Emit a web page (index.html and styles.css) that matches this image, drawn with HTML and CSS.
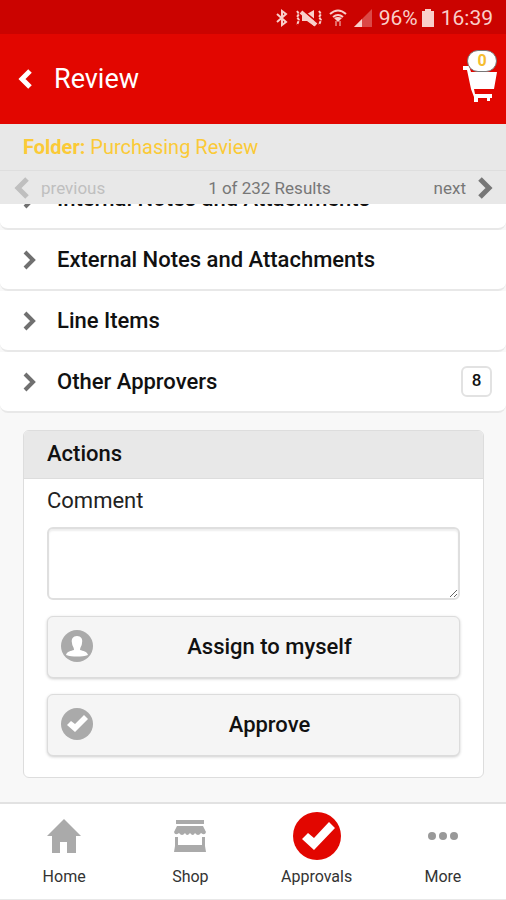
FILE: index.html
```html
<!DOCTYPE html>
<html lang="en">
<head>
<meta charset="utf-8">
<meta name="viewport" content="width=device-width, initial-scale=1">
<title>Review</title>
<link rel="stylesheet" href="styles.css">
</head>
<body>
<div class="status">
  <svg width="12" height="18" viewBox="0 0 12 18" fill="none" stroke="currentColor" stroke-width="2"><path d="M1 5l9 8-4 3V2l4 3-9 8"/></svg>
  <svg class="mute" width="27" height="18" viewBox="0 0 27 18" fill="currentColor"><path d="M7 5h5l7-4v16l-7-5H7z"/><path d="M7 1l16 13" fill="none" stroke="#cb0300" stroke-width="2"/><path d="M6 3l15 13" fill="none" stroke="currentColor" stroke-width="4"/><path d="M2 2l2 3-2 3 2 3-2 5M24 2l2 3-2 3 2 3-2 5" fill="none" stroke="currentColor" stroke-width="2" stroke-dasharray="3 1"/></svg>
  <svg class="wifi" width="18" height="18" viewBox="0 0 18 18" fill="none" stroke="currentColor" stroke-width="2"><path d="M1 5q8-7 16 0M4 8q5-4 10 0"/><path d="M5 9q4-2 8 0l-4 4z" fill="currentColor" stroke="none"/><path d="M7 12v5M11 12v5" opacity=".5"/></svg>
  <svg width="18" height="18" viewBox="0 0 18 18" fill="currentColor"><path d="M0 18L18 0v18z" opacity=".35"/><path d="M0 18l8-8v8z"/></svg>
  <span class="battery">96%<svg width="12" height="18" viewBox="0 0 12 18" fill="currentColor"><path d="M3 0h6v2h3v16H0V2h3z"/></svg></span>
  <span>16:39</span>
</div>
<header class="header">
  <button class="back" type="button" aria-label="Back"><svg width="14" height="20" viewBox="0 0 14 20" fill="none" stroke="currentColor" stroke-width="5"><path d="M12 2L4 10l8 8"/></svg></button>
  <h1>Review</h1>
  <a class="cart" href="#cart" aria-label="Cart, 0 items">
    <svg width="34" height="36" viewBox="0 0 34 36" fill="currentColor"><path d="M0 0h6l2 6h26l-3 17H11l1 5h17v4h-2v3h-3v-3h-9v4h-4v-5L8 23 4 4H0z"/></svg>
    <span class="count">0</span>
  </a>
</header>
<div class="folder"><b>Folder:</b> Purchasing Review</div>
<nav class="pager" aria-label="Results">
  <button type="button" disabled><svg width="15" height="22" viewBox="0 0 15 22" fill="none" stroke="currentColor" stroke-width="5"><path d="M13 2L4 11l9 9"/></svg>previous</button>
  <span>1 of 232 Results</span>
  <button type="button">next<svg width="15" height="22" viewBox="0 0 15 22" fill="none" stroke="currentColor" stroke-width="5"><path d="M2 2l9 9-9 9"/></svg></button>
</nav>
<main class="content">
  <div class="sections">
    <button type="button"><svg width="13" height="20" viewBox="0 0 13 20"><path d="M2 2l8 8-8 8"/></svg>Internal Notes and Attachments</button>
    <button type="button"><svg width="13" height="20" viewBox="0 0 13 20"><path d="M2 2l8 8-8 8"/></svg>External Notes and Attachments</button>
    <button type="button"><svg width="13" height="20" viewBox="0 0 13 20"><path d="M2 2l8 8-8 8"/></svg>Line Items</button>
    <button type="button"><svg width="13" height="20" viewBox="0 0 13 20"><path d="M2 2l8 8-8 8"/></svg>Other Approvers<span class="badge">8</span></button>
  </div>
  <section class="panel">
    <h2>Actions</h2>
    <form class="form">
      <label for="comment">Comment</label>
      <textarea id="comment"></textarea>
      <button type="button"><svg width="32" height="32" viewBox="0 0 32 32"><circle cx="16" cy="16" r="16" fill="#aaa"/><path d="M16 6c4 0 6 3 5 7 0 3-2 4-2 7 3 1 7 1 8 5-6 2-16 2-22 0 1-4 5-4 8-5 0-3-2-4-2-7-1-4 1-7 5-7z" fill="#fff"/></svg>Assign to myself</button>
      <button type="button"><svg width="32" height="32" viewBox="0 0 32 32"><circle cx="16" cy="16" r="16" fill="#aaa"/><path d="M6 17l4-4 4 3 9-9 4 4-13 13z" fill="#fff"/></svg>Approve</button>
    </form>
  </section>
</main>
<nav class="tabs" aria-label="Main">
  <a href="#home"><svg width="34" height="34" viewBox="0 0 34 34" fill="#aaa"><path d="M17 0l17 17h-5v17h-9V23h-7v11H5V17H0z"/></svg>Home</a>
  <a href="#shop"><svg width="32" height="32" viewBox="0 0 32 32" fill="#aaa"><path d="M2 0h28v4H2zM3 6h26l3 6q-1 4-5 1-3 4-6 0-2 4-5 0-3 4-5 0-3 4-6 0-4 3-5-1zM1 17h3v8h24v-8h3v9l1 6H0l1-6z"/></svg>Shop</a>
  <a href="#approvals" aria-current="page"><svg width="48" height="48" viewBox="0 0 48 48"><circle cx="24" cy="24" r="24" fill="#e20600"/><path d="M9 27l6-6 6 5 15-16 6 6-21 22z" fill="#fff"/></svg>Approvals</a>
  <a href="#more"><svg width="30" height="8" viewBox="0 0 30 8" fill="#999"><circle cx="4" cy="4" r="4"/><circle cx="15" cy="4" r="4"/><circle cx="26" cy="4" r="4"/></svg>More</a>
</nav>
</body>
</html>
```
FILE: styles.css
```css
* { box-sizing: border-box; }
body {
  margin: 0;
  min-height: 100vh;
  display: flex;
  flex-direction: column;
  background: #f8f8f8;
  color: #111;
  font-family: Roboto, "Liberation Sans", sans-serif;
  font-size: 22px;
}
button { font: inherit; color: inherit; border: 0; background: none; padding: 0; }
a { color: inherit; text-decoration: none; }
svg { display: block; flex: none; }
h1, h2 { margin: 0; font-size: 22px; }

.status {
  height: 34px;
  padding: 2px 13px 0;
  display: flex;
  align-items: center;
  justify-content: flex-end;
  gap: 7px;
  background: #cb0300;
  color: #f9cfca;
  font-size: 21px;
}
.battery { display: flex; align-items: center; gap: 4px; }

.header {
  height: 90px;
  padding: 0 9px 0 18px;
  display: flex;
  align-items: center;
  gap: 22px;
  background: #e20600;
  color: #fff;
}
.header h1 { flex: 1; font-size: 27px; font-weight: 400; }
.cart { position: relative; padding-top: 10px; }
.count {
  position: absolute;
  top: -6px;
  right: 0;
  width: 30px;
  height: 22px;
  border: 1px solid #777;
  border-radius: 11px;
  background: #fff;
  color: #f5bd30;
  font-size: 16px;
  font-weight: 700;
  line-height: 20px;
  text-align: center;
}

.folder {
  height: 47px;
  padding: 0 23px;
  line-height: 46px;
  background: #e8e8e8;
  border-bottom: 1px solid #dedede;
  color: #fbca37;
  font-size: 20px;
}
.pager {
  height: 33px;
  padding: 0 13px 0 14px;
  display: flex;
  justify-content: space-between;
  align-items: center;
  background: #e8e8e8;
  color: #777;
  font-size: 17px;
}
.pager button { display: flex; align-items: center; gap: 12px; }
.pager button:disabled { color: #bfbfbf; }

.content { flex: 1; overflow: hidden; padding-bottom: 24px; }
.sections { margin-top: -35px; }
.sections button {
  width: 100%;
  height: 61px;
  padding: 0 14px 0 23px;
  display: flex;
  align-items: center;
  gap: 21px;
  background: #fff;
  border-bottom: 2px solid #e8e8e8;
  border-radius: 0 0 8px 8px;
  font-weight: 500;
  text-align: left;
}
.sections svg { fill: none; stroke: #707070; stroke-width: 4; }
.badge {
  margin-left: auto;
  width: 31px;
  height: 31px;
  border: 2px solid #e2e2e2;
  border-radius: 6px;
  font-size: 17px;
  line-height: 25px;
  text-align: center;
}

.panel {
  margin: 17px 22px 0 23px;
  background: #fff;
  border: 1px solid #ddd;
  border-radius: 6px;
  overflow: hidden;
}
.panel h2 {
  height: 48px;
  padding: 0 23px;
  line-height: 45px;
  background: #e8e8e8;
  border-bottom: 1px solid #ddd;
  font-weight: 500;
}
.form { padding: 0 23px 21px; }
.form label { display: block; line-height: 44px; color: #222; }
.form textarea {
  display: block;
  width: 100%;
  height: 73px;
  margin-top: 4px;
  padding: 8px;
  border: 2px solid #dfdfdf;
  border-radius: 6px;
  box-shadow: inset 0 2px 2px #eee;
  background: #fff;
  font: inherit;
}
.form button {
  width: 100%;
  height: 62px;
  margin-top: 16px;
  padding: 0 13px 2px;
  display: grid;
  grid-template-columns: 32px 1fr;
  align-items: center;
  background: #f5f5f5;
  border: 1px solid #dcdcdc;
  border-radius: 6px;
  box-shadow: 0 1px 3px #ccc;
  font-weight: 500;
}

.tabs {
  height: 98px;
  padding: 0 0 12px 1px;
  display: grid;
  grid-template-columns: repeat(4, 1fr);
  background: #fff;
  border-top: 2px solid #e2e2e2;
  border-bottom: 1px solid #e8e8e8;
  color: #333;
  font-size: 16px;
}
.tabs a { display: flex; flex-direction: column; align-items: center; line-height: 20px; }
.tabs svg { margin: auto; }
```
